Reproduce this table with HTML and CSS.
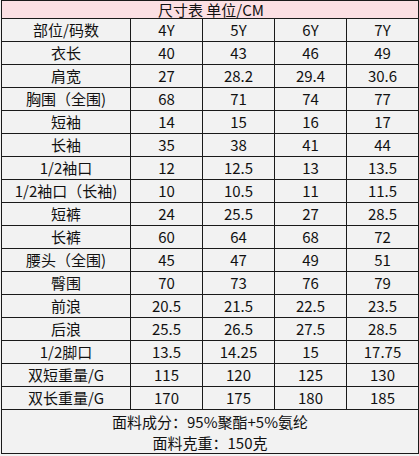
FILE: index.html
```html
<!DOCTYPE html>
<html>
<head>
<meta charset="utf-8">
<link rel="stylesheet" href="styles.css">
</head>
<body>
<table class="size">
  <colgroup>
    <col class="c0"><col class="c1"><col class="c2"><col class="c3"><col class="c4">
  </colgroup>
  <tr class="head"><td colspan="5"><span class="title">尺寸表 单位/CM</span></td></tr>
  <tr><td>部位/码数</td><td>4Y</td><td>5Y</td><td>6Y</td><td>7Y</td></tr>
  <tr><td>衣长</td><td>40</td><td>43</td><td>46</td><td>49</td></tr>
  <tr><td>肩宽</td><td>27</td><td>28.2</td><td>29.4</td><td>30.6</td></tr>
  <tr><td>胸围（全围)</td><td>68</td><td>71</td><td>74</td><td>77</td></tr>
  <tr><td>短袖</td><td>14</td><td>15</td><td>16</td><td>17</td></tr>
  <tr><td>长袖</td><td>35</td><td>38</td><td>41</td><td>44</td></tr>
  <tr><td>1/2袖口</td><td>12</td><td>12.5</td><td>13</td><td>13.5</td></tr>
  <tr><td>1/2袖口（长袖)</td><td>10</td><td>10.5</td><td>11</td><td>11.5</td></tr>
  <tr><td>短裤</td><td>24</td><td>25.5</td><td>27</td><td>28.5</td></tr>
  <tr><td>长裤</td><td>60</td><td>64</td><td>68</td><td>72</td></tr>
  <tr><td>腰头（全围)</td><td>45</td><td>47</td><td>49</td><td>51</td></tr>
  <tr><td>臀围</td><td>70</td><td>73</td><td>76</td><td>79</td></tr>
  <tr><td>前浪</td><td>20.5</td><td>21.5</td><td>22.5</td><td>23.5</td></tr>
  <tr><td>后浪</td><td>25.5</td><td>26.5</td><td>27.5</td><td>28.5</td></tr>
  <tr><td>1/2脚口</td><td>13.5</td><td>14.25</td><td>15</td><td>17.75</td></tr>
  <tr><td>双短重量/G</td><td>115</td><td>120</td><td>125</td><td>130</td></tr>
  <tr><td>双长重量/G</td><td>170</td><td>175</td><td>180</td><td>185</td></tr>
  <tr class="foot"><td colspan="5"><div>面料成分：95%聚酯+5%氨纶</div><div>面料克重：150克</div></td></tr>
</table>
</body>
</html>
```

FILE: styles.css
```css
html, body {
  margin: 0;
  padding: 0;
  background: #f2f2f2;
}
body {
  padding: 0 0 0 1px;
  font-family: "Noto Sans CJK SC", "Noto Sans", sans-serif;
  color: #111;
}
.size {
  border-collapse: collapse;
  table-layout: fixed;
  width: 418px;
  background: #f2f2f2;
  font-size: 15px;
}
.c0 { width: 129px; }
.c1 { width: 72px; }
.c2 { width: 72px; }
.c3 { width: 72px; }
.c4 { width: 72px; }
.size td {
  border: 1px solid #1a1a1a;
  height: 22px;
  padding: 0;
  text-align: center;
  vertical-align: middle;
  line-height: 20px;
  white-space: nowrap;
}
.size tr.head td {
  height: 17px;
  line-height: 16px;
  background: #fbdfe3;
  text-align: left;
}
.title {
  display: inline-block;
  padding-left: 156px;
}
.size tr.foot td {
  height: 43px;
  line-height: 21px;
}
```
